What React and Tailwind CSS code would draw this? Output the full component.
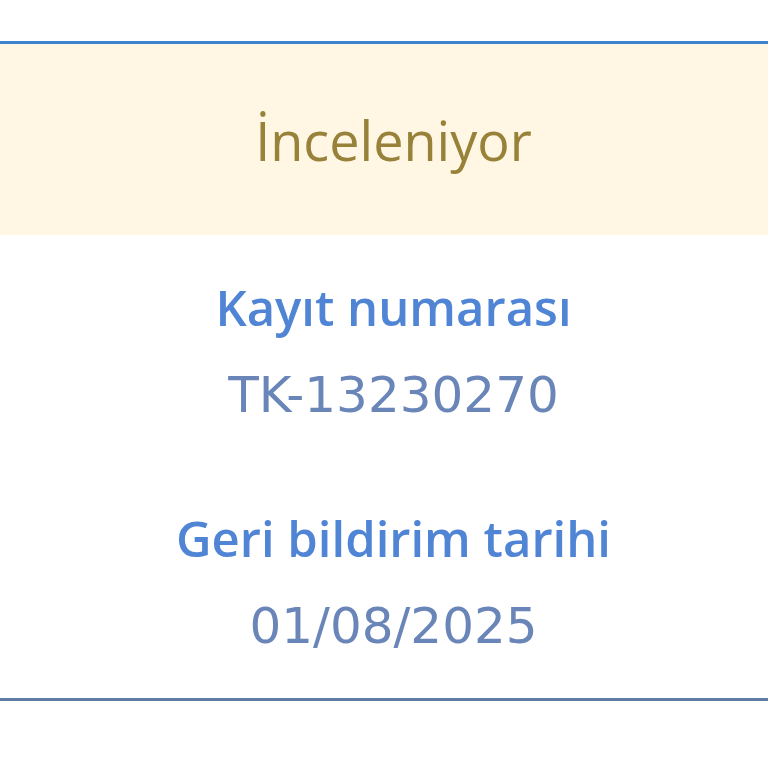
export default function App() {
  return (
    <div className="min-h-[768px] bg-white pt-[41px]">
      <div className="border-t-[3px] border-b-[3px] border-t-[#3d84cf] border-b-[#5d7ca6]">
        {/* Status */}
        <div className="h-[191px] bg-[#fff7e4] flex items-center justify-center pl-[19px]">
          <span className="font-['Open_Sans',sans-serif] text-[54px] text-[#98823a] leading-none">
            İnceleniyor
          </span>
        </div>

        {/* Details */}
        <div className="pt-[28px] pb-[28px] pl-[19px] flex flex-col items-center text-center">
          <div className="font-['Open_Sans',sans-serif] font-semibold text-[49px] leading-[88px] text-[#5084d4]">
            Kayıt numarası
          </div>
          <div className="font-['DejaVu_Sans',sans-serif] text-[50px] leading-[88px] text-[#6a86b8]">
            TK-13230270
          </div>
          <div className="mt-[55px] font-['Open_Sans',sans-serif] font-semibold text-[49px] leading-[88px] text-[#5084d4]">
            Geri bildirim tarihi
          </div>
          <div className="font-['DejaVu_Sans',sans-serif] text-[50px] leading-[88px] text-[#6a86b8]">
            01/08/2025
          </div>
        </div>
      </div>
    </div>
  );
}
